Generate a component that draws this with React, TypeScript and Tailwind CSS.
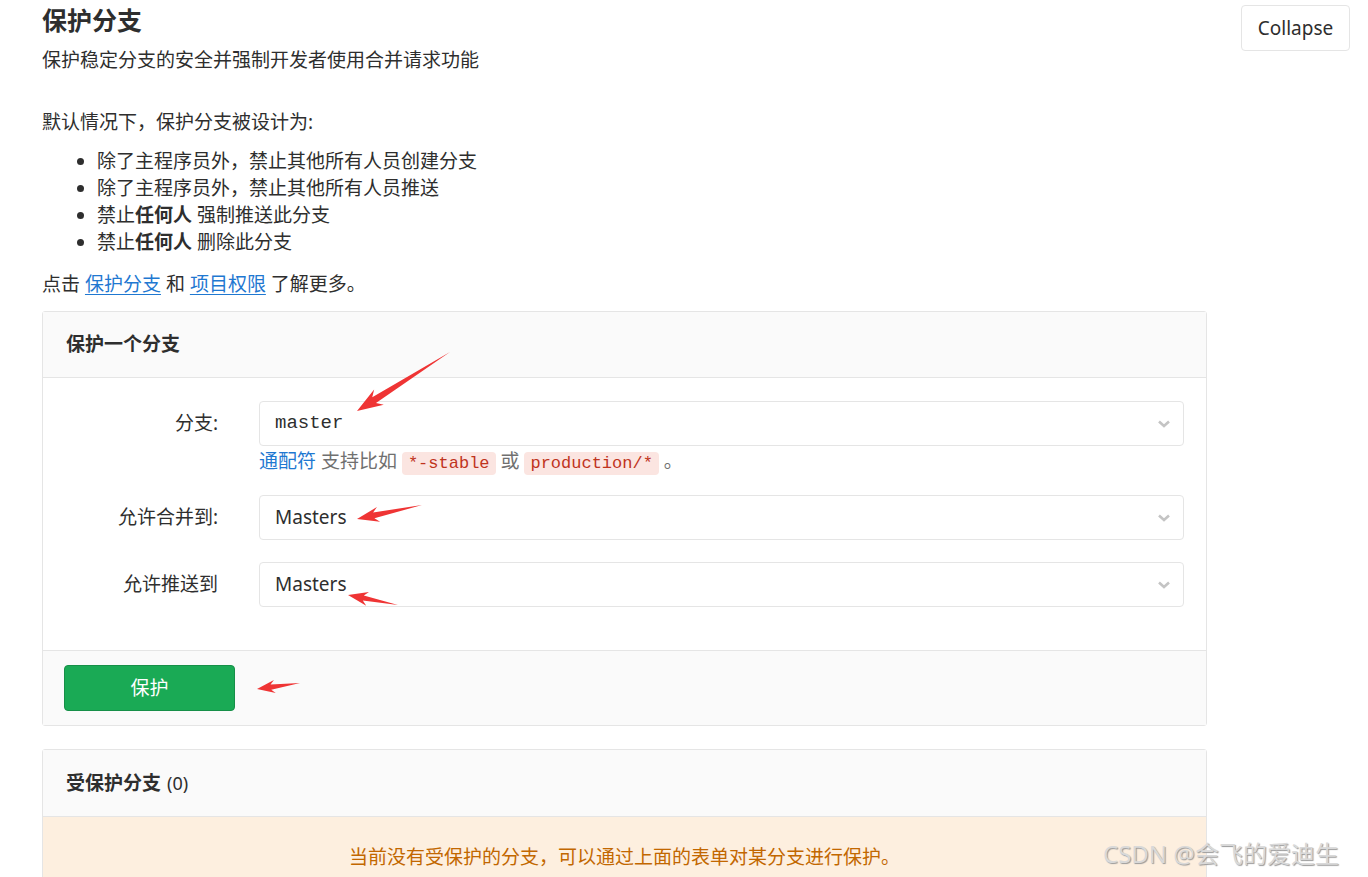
import React from "react"

const sans = { fontFamily: '"Noto Sans", "Noto Sans CJK SC", sans-serif' }

function Chevron() {
  return (
    <svg width="14" height="10" viewBox="0 0 14 10" className="absolute right-[12px] top-1/2 -translate-y-1/2">
      <path d="M2 2.5 L7 7 L12 2.5" fill="none" stroke="#c4c4c4" strokeWidth="2.6" />
    </svg>
  )
}

function Select({ value, mono }: { value: string; mono?: boolean }) {
  return (
    <div className="relative h-[45px] w-full rounded-[4px] border border-[#e5e5e5] bg-white flex items-center pl-[15px]">
      {mono ? (
        <span className="text-[19px] text-[#2e2e2e] font-['Liberation_Mono','DejaVu_Sans_Mono',monospace]">{value}</span>
      ) : (
        <span className="text-[19px] text-[#2e2e2e]">{value}</span>
      )}
      <Chevron />
    </div>
  )
}

type Pt = [number, number]
function arrowPoints(tip: Pt, tail: Pt, hl = 24, hw = 8, sw = 3.2) {
  const dx = tail[0] - tip[0]
  const dy = tail[1] - tip[1]
  const len = Math.hypot(dx, dy)
  const ux = dx / len
  const uy = dy / len
  const nx = -uy
  const ny = ux
  const p = (a: number, b: number): string => `${tip[0] + ux * a + nx * b},${tip[1] + uy * a + ny * b}`
  return [
    `${tip[0]},${tip[1]}`,
    p(hl, hw),
    p(hl * 0.78, sw),
    `${tail[0]},${tail[1]}`,
    p(hl * 0.78, -sw),
    p(hl, -hw),
  ].join(" ")
}

function Arrows() {
  const arrows: [Pt, Pt, number, number, number][] = [
    [[357, 411], [450, 352], 26, 9, 3.5],
    [[357, 519], [422, 505], 22, 7.5, 3],
    [[348, 595], [398, 605], 20, 7, 2.6],
    [[257, 689], [300, 683], 18, 6.5, 2.6],
  ]
  return (
    <svg className="pointer-events-none absolute left-0 top-0" width="1368" height="877">
      {arrows.map((a, i) => (
        <polygon key={i} points={arrowPoints(a[0], a[1], a[2], a[3], a[4])} fill="#ef3434" />
      ))}
    </svg>
  )
}

export default function App() {
  return (
    <div className="relative h-[877px] w-[1368px] overflow-hidden bg-white text-[#2e2e2e]" style={sans}>
      <div className="pl-[42px] pr-[18px] pt-[5px]">
        {/* header */}
        <div className="flex justify-between items-start">
          <div>
            <h2 className="text-[25px] leading-[30px] font-bold">保护分支</h2>
            <p className="mt-[12px] text-[19px] leading-[27px]">保护稳定分支的安全并强制开发者使用合并请求功能</p>
          </div>
          <button className="h-[46px] w-[109px] rounded-[4px] border border-[#e5e5e5] bg-white text-[19px] text-[#2e2e2e]">Collapse</button>
        </div>

        <div className="w-[1165px]">
          <p className="mt-[35px] text-[19px] leading-[27px]">默认情况下，保护分支被设计为:</p>
          <ul className="mt-[12px] list-disc pl-[55px] text-[19px] leading-[27px]">
            <li>除了主程序员外，禁止其他所有人员创建分支</li>
            <li>除了主程序员外，禁止其他所有人员推送</li>
            <li>禁止<b>任何人</b> 强制推送此分支</li>
            <li>禁止<b>任何人</b> 删除此分支</li>
          </ul>
          <p className="mt-[15px] text-[19px] leading-[27px]">
            点击 <a className="text-[#1f78d1] underline underline-offset-[3px]" href="#">保护分支</a> 和{" "}
            <a className="text-[#1f78d1] underline underline-offset-[3px]" href="#">项目权限</a> 了解更多。
          </p>

          {/* protect form */}
          <div className="mt-[13px] rounded-[3px] border border-[#e5e5e5]">
            <div className="h-[66px] flex items-center pl-[23px] bg-[#fafafa] border-b border-[#e5e5e5] text-[19px] font-bold">保护一个分支</div>
            <div className="pt-[23px] pb-[43px] pr-[22px]">
              <div className="flex items-center">
                <label className="w-[175px] text-right text-[19px]">分支:</label>
                <div className="ml-[41px] flex-1">
                  <Select value="master" mono />
                </div>
              </div>
              <div className="ml-[216px] mt-[2px] text-[19px] leading-[27px] text-[#707070]">
                <a className="text-[#1f78d1]" href="#">通配符</a> 支持比如{" "}
                <code className="rounded-[4px] bg-[#fbe5e1] px-[6px] py-[2px] text-[17px] text-[#c0341d] font-['Liberation_Mono','DejaVu_Sans_Mono',monospace]">*-stable</code> 或{" "}
                <code className="rounded-[4px] bg-[#fbe5e1] px-[6px] py-[2px] text-[17px] text-[#c0341d] font-['Liberation_Mono','DejaVu_Sans_Mono',monospace]">production/*</code> 。
              </div>
              <div className="mt-[18px] flex items-center">
                <label className="w-[175px] text-right text-[19px]">允许合并到:</label>
                <div className="ml-[41px] flex-1">
                  <Select value="Masters" />
                </div>
              </div>
              <div className="mt-[22px] flex items-center">
                <label className="w-[175px] text-right text-[19px]">允许推送到</label>
                <div className="ml-[41px] flex-1">
                  <Select value="Masters" />
                </div>
              </div>
            </div>
            <div className="h-[75px] flex items-center pl-[21px] bg-[#fafafa] border-t border-[#e5e5e5]">
              <button className="h-[46px] w-[171px] rounded-[4px] bg-[#1aaa55] border border-[#168f48] text-white text-[19px]">保护</button>
            </div>
          </div>

          {/* protected list */}
          <div className="mt-[23px] rounded-[3px] border border-[#e5e5e5]">
            <div className="h-[67px] flex items-center pl-[23px] bg-[#fafafa] border-b border-[#e5e5e5] text-[19px]">
              <span className="font-bold">受保护分支</span>
              <span className="ml-[6px] text-[18px]">(0)</span>
            </div>
            <div className="bg-[#fdefdf] pt-[27px] pb-[30px] text-center text-[19px] leading-[27px] text-[#c26700]">
              当前没有受保护的分支，可以通过上面的表单对某分支进行保护。
            </div>
          </div>
        </div>
      </div>

      <Arrows />

      <div
        className="absolute left-[1103px] top-[838px] text-[24px] leading-[32px] text-[#d9d9d9] whitespace-nowrap"
        style={{ textShadow: "1px 1px 1px #9a9a9a" }}
      >
        CSDN @会飞的爱迪生
      </div>
    </div>
  )
}
